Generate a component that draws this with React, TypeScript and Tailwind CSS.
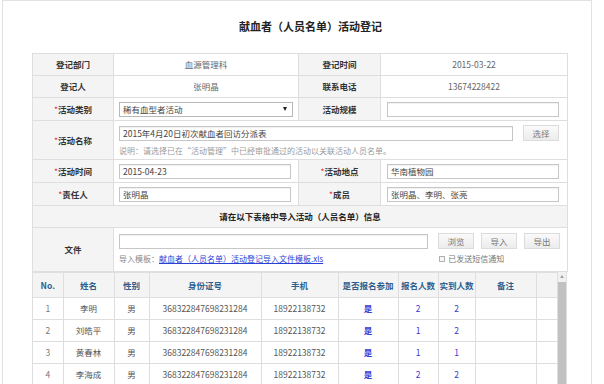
import React from 'react';

const people = [
  { no: 1, name: '李明', sex: '男', id: '368322847698231284', phone: '18922138732', join: '是', signed: 2, came: 2 },
  { no: 2, name: '刘皓平', sex: '男', id: '368322847698231284', phone: '18922138732', join: '是', signed: 1, came: 2 },
  { no: 3, name: '黄春林', sex: '男', id: '368322847698231284', phone: '18922138732', join: '是', signed: 1, came: 1 },
  { no: 4, name: '李海成', sex: '男', id: '368322847698231284', phone: '18922138732', join: '是', signed: 2, came: 2 },
];

// label cell (grey, bold)
function Label({ children, star }: { children: React.ReactNode; star?: boolean }) {
  return (
    <td className="border border-[#dedede] bg-[#f4f4f4] text-center font-bold text-[#333]">
      {star && <span className="text-[#e0303a] font-normal">*</span>}
      {children}
    </td>
  );
}

function Input({ value, className = '' }: { value?: string; className?: string }) {
  return (
    <div className={`h-[15px] border border-[#c6c6c6] bg-white px-[3px] leading-[13px] text-[#444] shadow-[inset_0_1px_1px_rgba(0,0,0,0.06)] ${className}`}>
      {value}
    </div>
  );
}

function Btn({ children }: { children: React.ReactNode }) {
  return (
    <div className="h-[16px] w-[36px] border border-[#dcdcdc] bg-gradient-to-b from-[#fafafa] to-[#ececec] text-center leading-[14px] text-[#777]">
      {children}
    </div>
  );
}

export default function App() {
  return (
    <div className="w-[604px] h-[384px] overflow-hidden bg-white font-['Noto_Sans_CJK_SC',sans-serif] text-[8.5px]">
      <div className="ml-[2px] w-[590px] h-[420px] border border-[#e2e2e2]">
        {/* 标题 */}
        <h1 className="pt-[17px] pl-[236px] text-[11px] leading-[16px] font-bold text-[#222]">献血者（人员名单）活动登记</h1>

        <div className="ml-[29px] mt-[19px] w-[535px]">
          <table className="w-[535px] table-fixed border-collapse">
            <colgroup>
              <col className="w-[81px]" />
              <col className="w-[185px]" />
              <col className="w-[82px]" />
              <col className="w-[187px]" />
            </colgroup>
            <tbody>
              <tr className="h-[22px]">
                <Label>登记部门</Label>
                <td className="border border-[#dedede] text-center text-[#666]">血源管理科</td>
                <Label>登记时间</Label>
                <td className="border border-[#dedede] text-center text-[#666]">2015-03-22</td>
              </tr>
              <tr className="h-[22px]">
                <Label>登记人</Label>
                <td className="border border-[#dedede] text-center text-[#666]">张明晶</td>
                <Label>联系电话</Label>
                <td className="border border-[#dedede] text-center text-[#666]">13674228422</td>
              </tr>
              <tr className="h-[23px]">
                <Label star>活动类别</Label>
                <td className="border border-[#dedede] px-[5px]">
                  <div className="flex h-[15px] items-center justify-between border border-[#b8b8b8] bg-white pl-[3px] pr-[5px] text-[#444]">
                    <span>稀有血型者活动</span>
                    <span className="h-0 w-0 border-x-[2.5px] border-t-[4px] border-x-transparent border-t-[#222]" />
                  </div>
                </td>
                <Label>活动规模</Label>
                <td className="border border-[#dedede] pl-[6px] pr-[8px]">
                  <Input />
                </td>
              </tr>
              <tr className="h-[39px]">
                <Label star>活动名称</Label>
                <td colSpan={3} className="border border-[#dedede] pl-[5px] pr-[8px] pt-[4px] align-top">
                  <div className="flex items-center gap-[10px]">
                    <Input value="2015年4月20日初次献血者回访分派表" className="w-[395px]" />
                    <Btn>选择</Btn>
                  </div>
                  <p className="mt-[3px] text-[8px] leading-[14px] text-[#9a9a9a]">说明：请选择已在“活动管理”中已经审批通过的活动以关联活动人员名单。</p>
                </td>
              </tr>
              <tr className="h-[23px]">
                <Label star>活动时间</Label>
                <td className="border border-[#dedede] pl-[5px] pr-[7px]">
                  <Input value="2015-04-23" />
                </td>
                <Label star>活动地点</Label>
                <td className="border border-[#dedede] pl-[6px] pr-[8px]">
                  <Input value="华南植物园" />
                </td>
              </tr>
              <tr className="h-[23px]">
                <Label star>责任人</Label>
                <td className="border border-[#dedede] pl-[5px] pr-[7px]">
                  <Input value="张明晶" />
                </td>
                <Label star>成员</Label>
                <td className="border border-[#dedede] pl-[6px] pr-[8px]">
                  <Input value="张明晶、李明、张亮" />
                </td>
              </tr>
              <tr className="h-[22px]">
                <td colSpan={4} className="border border-[#dedede] bg-[#f4f4f4] text-center font-bold text-[#222]">
                  请在以下表格中导入活动（人员名单）信息
                </td>
              </tr>
              <tr className="h-[44px]">
                <Label>文件</Label>
                <td colSpan={3} className="border border-[#dedede] pl-[5px] pr-[7px]">
                  <div className="flex items-center">
                    <Input className="w-[309px]" />
                    <div className="ml-[10px] flex gap-[7px]">
                      <Btn>浏览</Btn>
                      <Btn>导入</Btn>
                      <Btn>导出</Btn>
                    </div>
                  </div>
                  <div className="mt-[3px] flex items-center text-[8px] leading-[14px]">
                    <span className="text-[#888]">导入模板：</span>
                    <span className="text-[#2b3fd4] underline">献血者（人员名单）活动登记导入文件模板.xls</span>
                    <span className="ml-[116px] flex items-center gap-[3px] text-[#777]">
                      <span className="h-[6px] w-[6px] border border-[#b0b0b0] bg-[#f6f6f6]" />
                      已发送短信通知
                    </span>
                  </div>
                </td>
              </tr>
            </tbody>
          </table>

          {/* 人员名单 */}
          <div className="flex items-stretch border-x border-[#dedede]">
            <table className="w-[524px] table-fixed border-collapse self-start">
              <colgroup>
                <col className="w-[30px]" />
                <col className="w-[51px]" />
                <col className="w-[35px]" />
                <col className="w-[112px]" />
                <col className="w-[77px]" />
                <col className="w-[60px]" />
                <col className="w-[40px]" />
                <col className="w-[37px]" />
                <col className="w-[61px]" />
                <col className="w-[21px]" />
              </colgroup>
              <thead>
                <tr className="h-[25px] bg-[#f4f4f4] text-[#2c5e8e] font-bold">
                  <th className="border border-[#dedede] border-l-0 font-bold">No.</th>
                  <th className="border border-[#dedede]">姓名</th>
                  <th className="border border-[#dedede]">性别</th>
                  <th className="border border-[#dedede]">身份证号</th>
                  <th className="border border-[#dedede]">手机</th>
                  <th className="border border-[#dedede]">是否报名参加</th>
                  <th className="border border-[#dedede]">报名人数</th>
                  <th className="border border-[#dedede]">实到人数</th>
                  <th className="border border-[#dedede]">备注</th>
                  <th className="border border-[#dedede]"></th>
                </tr>
              </thead>
              <tbody>
                {people.map((p) => (
                  <tr key={p.no} className="h-[22px] text-center text-[#555]">
                    <td className="border border-[#dedede] border-l-0 text-[#777]">{p.no}</td>
                    <td className="border border-[#dedede]">{p.name}</td>
                    <td className="border border-[#dedede]">{p.sex}</td>
                    <td className="border border-[#dedede]">{p.id}</td>
                    <td className="border border-[#dedede]">{p.phone}</td>
                    <td className="border border-[#dedede] font-bold text-[#3a3ad2]">{p.join}</td>
                    <td className="border border-[#dedede] text-[#3a3ad2]">{p.signed}</td>
                    <td className="border border-[#dedede] text-[#3a3ad2]">{p.came}</td>
                    <td className="border border-[#dedede]"></td>
                    <td className="border border-[#dedede]"></td>
                  </tr>
                ))}
              </tbody>
            </table>
            {/* 滚动条 */}
            <div className="flex w-[10px] flex-col items-center bg-[#f1f1f1]">
              <span className="mt-[3px] h-0 w-0 border-x-[2px] border-b-[3px] border-x-transparent border-b-[#a3a3a3]" />
              <div className="mt-[4px] w-[8px] flex-1 bg-[#c1c1c1]" />
            </div>
          </div>
        </div>
      </div>
    </div>
  );
}
